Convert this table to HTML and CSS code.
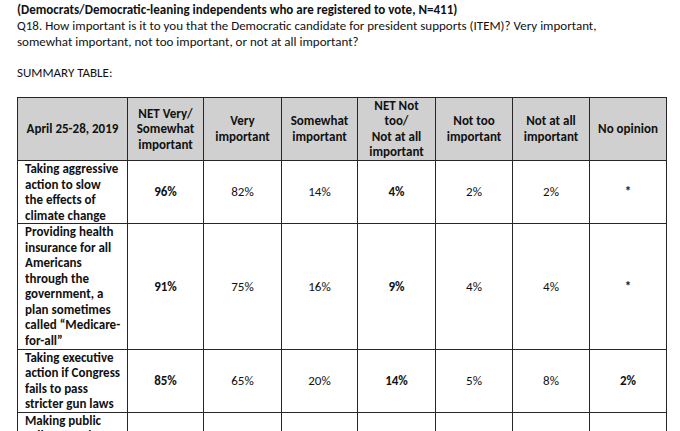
FILE: index.html
```html
<!DOCTYPE html>
<html>
<head>
<meta charset="utf-8">
<link rel="stylesheet" href="styles.css">
</head>
<body>
<div class="page">
  <p class="title">(Democrats/Democratic-leaning independents who are registered to vote, N=411)</p>
  <p class="question">Q18. How important is it to you that the Democratic candidate for president supports (ITEM)? Very important, somewhat important, not too important, or not at all important?</p>
  <p class="blank">&nbsp;</p>
  <p class="summary">SUMMARY TABLE:</p>
  <p class="blank">&nbsp;</p>
  <table class="results">
    <colgroup>
      <col class="c-label">
      <col class="c-76">
      <col class="c-78">
      <col class="c-76">
      <col class="c-78">
      <col class="c-77">
      <col class="c-77">
      <col class="c-77">
    </colgroup>
    <thead>
      <tr>
        <th>April 25-28, 2019</th>
        <th>NET Very/<br>Somewhat<br>important</th>
        <th>Very<br>important</th>
        <th>Somewhat<br>important</th>
        <th>NET Not<br>too/<br>Not at all<br>important</th>
        <th>Not too<br>important</th>
        <th>Not at all<br>important</th>
        <th>No opinion</th>
      </tr>
    </thead>
    <tbody>
      <tr>
        <td class="label">Taking aggressive<br>action to slow<br>the effects of<br>climate change</td>
        <td class="b">96%</td>
        <td>82%</td>
        <td>14%</td>
        <td class="b">4%</td>
        <td>2%</td>
        <td>2%</td>
        <td class="b">*</td>
      </tr>
      <tr>
        <td class="label">Providing health<br>insurance for all<br>Americans<br>through the<br>government, a<br>plan sometimes<br>called “Medicare-<br>for-all”</td>
        <td class="b">91%</td>
        <td>75%</td>
        <td>16%</td>
        <td class="b">9%</td>
        <td>4%</td>
        <td>4%</td>
        <td class="b">*</td>
      </tr>
      <tr>
        <td class="label">Taking executive<br>action if Congress<br>fails to pass<br>stricter gun laws</td>
        <td class="b">85%</td>
        <td>65%</td>
        <td>20%</td>
        <td class="b">14%</td>
        <td>5%</td>
        <td>8%</td>
        <td class="b">2%</td>
      </tr>
      <tr>
        <td class="label">Making public<br>colleges and<br>universities<br>tuition-free</td>
        <td class="b">79%</td>
        <td>58%</td>
        <td>21%</td>
        <td class="b">20%</td>
        <td>12%</td>
        <td>8%</td>
        <td class="b">1%</td>
      </tr>
    </tbody>
  </table>
</div>
</body>
</html>
```

FILE: styles.css
```css
html, body {
  margin: 0;
  padding: 0;
  background: #ffffff;
}

body {
  font-family: "Carlito", "Lato", sans-serif;
  font-size: 13px;
  line-height: 15.8px;
  color: #111111;
}

.page {
  padding: 2px 14px 0 17px;
}

.page p {
  margin: 0;
}

.title {
  font-weight: bold;
}

.question {
  max-width: 600px;
}

.results {
  border-collapse: collapse;
  table-layout: fixed;
  width: 649px;
  line-height: 15.55px;
}

.c-label { width: 110px; }
.c-76 { width: 76px; }
.c-77 { width: 77px; }
.c-78 { width: 78px; }

.results th,
.results td {
  border: 1px solid #262626;
  padding: 0 4px;
  text-align: center;
  vertical-align: middle;
}

.results th {
  background: #d0d0d0;
  font-weight: bold;
}

.results td.label {
  text-align: left;
  font-weight: bold;
  white-space: nowrap;
  padding: 0 2px 0 7px;
}

.results td.b {
  font-weight: bold;
}
```
